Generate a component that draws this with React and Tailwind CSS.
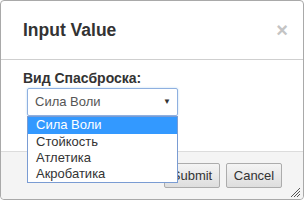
const OPTIONS = ['Сила Воли', 'Стойкость', 'Атлетика', 'Акробатика']

function ResizeGrip() {
  return (
    <svg width="11" height="11" viewBox="0 0 11 11" className="absolute right-[2px] bottom-[1px]">
      <path d="M10 1 L1 10 M10 4 L4 10 M10 7 L7 10" stroke="#555" strokeWidth="1" />
    </svg>
  )
}

export default function App() {
  return (
    <div className="w-[307px] h-[202px] bg-white font-['Liberation_Sans',Arial,sans-serif]">
      <div className="relative w-[304px] h-[200px] border border-[#a9a9a9] rounded-[4px] flex flex-col overflow-visible">
        {/* header */}
        <div className="h-[59px] shrink-0 flex items-center justify-between pl-[22px] pr-[15px] border-b border-[#cfcfcf]">
          <span className="text-[17.5px] font-bold text-[#333]">Input Value</span>
          <span className="text-[20px] font-bold text-[#c4c4c4] leading-none">×</span>
        </div>

        {/* body */}
        <div className="h-[91px] shrink-0 pt-[10px] pl-[22px] bg-white">
          <div className="text-[14px] leading-[16px] font-bold text-[#333]">Вид Спасброска:</div>
          <div className="relative mt-[2px] ml-[4px] w-[151px]">
            <div className="h-[28px] border border-[#8fb0e0] rounded-[2px] flex items-center justify-between pl-[7px] pr-[6px] text-[13px] text-[#555] shadow-[0_0_2px_rgba(102,175,233,0.5)]">
              <span>Сила Воли</span>
              <span className="text-[8px] text-[#333]">▼</span>
            </div>
            <div className="absolute z-10 left-0 top-[28px] w-[151px] bg-white border border-[#7a9cd3] text-[13px] leading-[16px] text-[#333]">
              {OPTIONS.map((o, i) => (
                <div key={o} className={i === 0 ? 'h-[17px] pl-[8px] bg-[#3399ff] text-white' : 'h-[16px] pl-[8px]'}>
                  {o}
                </div>
              ))}
            </div>
          </div>
        </div>

        {/* footer */}
        <div className="relative flex-1 bg-[#f4f4f4] border-t border-[#dcdcdc] rounded-b-[4px] flex justify-end items-start pt-[11px] pr-[21px] gap-[6px]">
          <button className="w-[56px] h-[25px] border border-[#acacac] rounded-[2px] bg-gradient-to-b from-[#f4f4f4] to-[#dedede] text-[13px] text-[#333]">
            Submit
          </button>
          <button className="w-[56px] h-[25px] border border-[#acacac] rounded-[2px] bg-gradient-to-b from-[#f4f4f4] to-[#dedede] text-[13px] text-[#333]">
            Cancel
          </button>
          <ResizeGrip />
        </div>
      </div>
    </div>
  )
}
